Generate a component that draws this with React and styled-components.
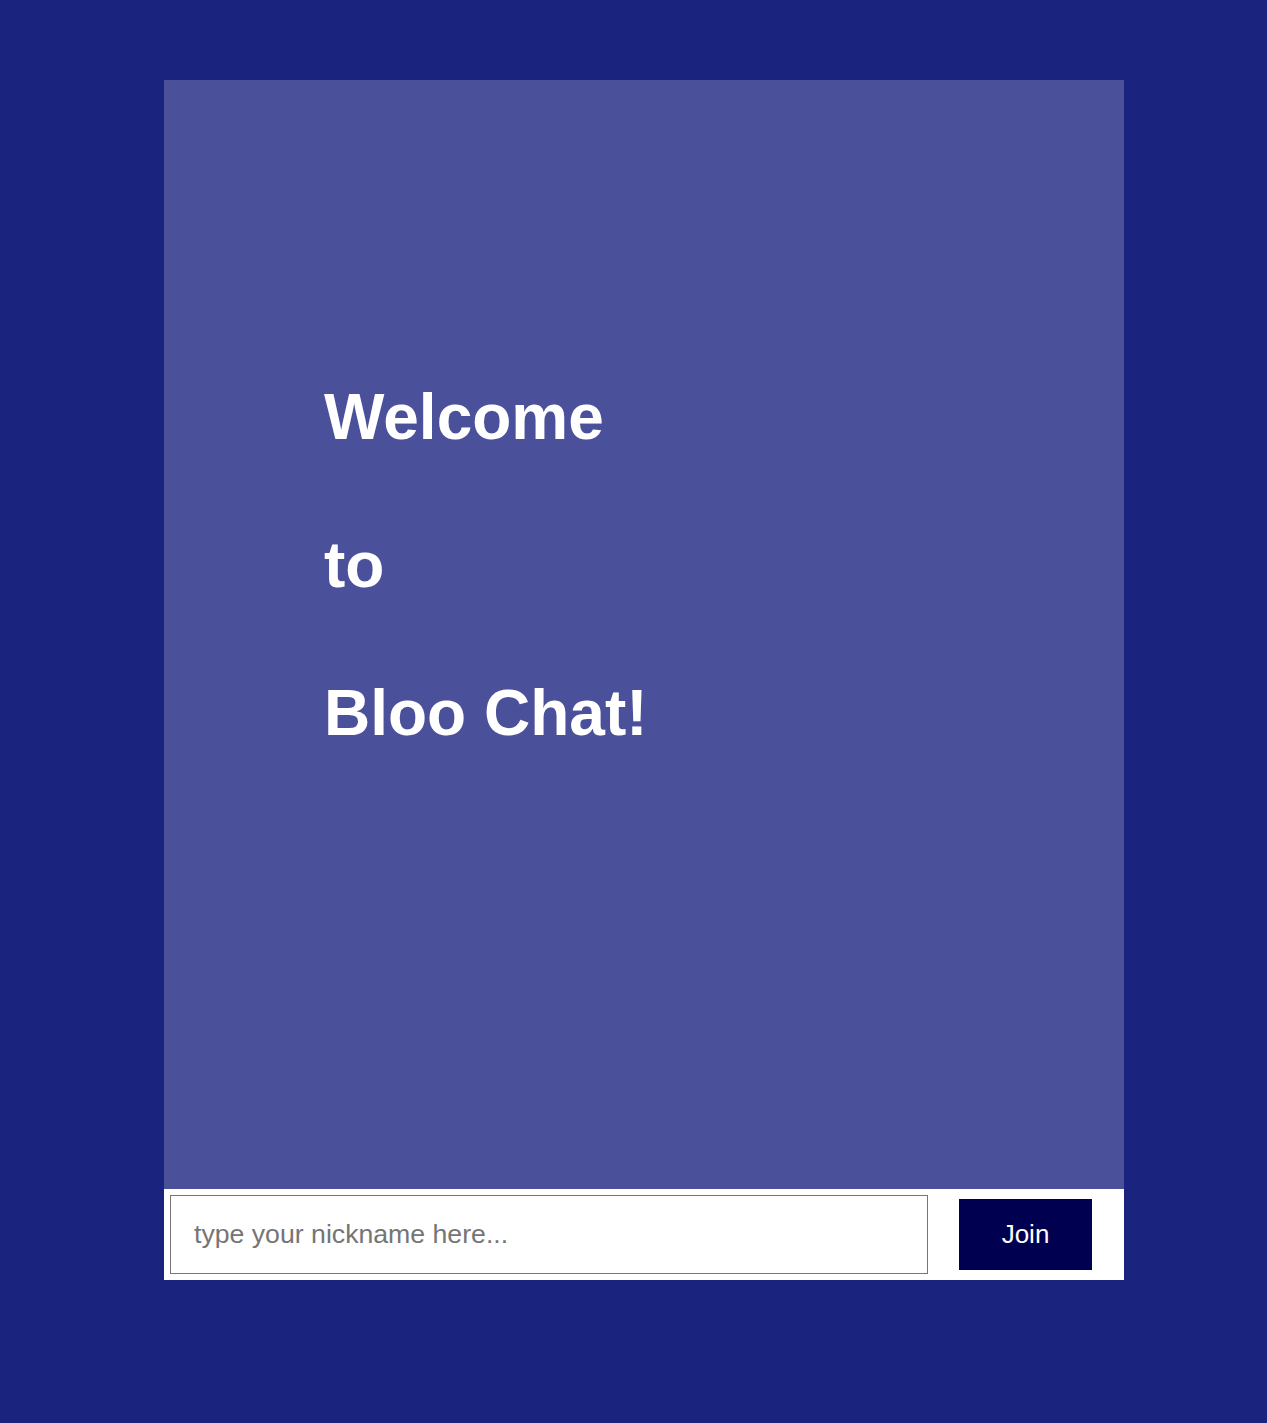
import styled, { createGlobalStyle } from "styled-components";

const GlobalStyle = createGlobalStyle`
  html, body {
    margin: 0;
    padding: 0;
    background-color: #1a237e;
    font-family: "Liberation Sans", Arial, sans-serif;
  }
`;

const Page = styled.div`
  min-height: 1423px;
  padding: 80px 0 0 164px;
  box-sizing: border-box;
`;

const ChatBox = styled.div`
  width: 960px;
  height: 1200px;
  display: flex;
  flex-direction: column;
  background-color: #4a5099;
`;

const Welcome = styled.div`
  flex: 1;
  padding: 300px 0 0 160px;
`;

const Title = styled.h1`
  margin: 0;
  color: #ffffff;
  font-size: 64px;
  line-height: 74px;
  font-weight: bold;
`;

const JoinBar = styled.form`
  height: 91px;
  box-sizing: border-box;
  background-color: #ffffff;
  display: flex;
  align-items: flex-start;
  padding: 6px 32px 0 6px;
  gap: 31px;
`;

const NicknameInput = styled.input`
  width: 758px;
  height: 79px;
  box-sizing: border-box;
  border: 1px solid #767676;
  padding: 0 23px;
  font-family: "Liberation Sans", Arial, sans-serif;
  font-size: 20pt;
  color: #333;
  &::placeholder {
    color: #757575;
  }
  &:focus {
    outline: none;
  }
`;

const JoinButton = styled.button`
  margin-top: 4px;
  width: 133px;
  height: 71px;
  border: none;
  background-color: #000050;
  color: #ffffff;
  font-family: "Liberation Sans", Arial, sans-serif;
  font-size: 19.5pt;
  cursor: pointer;
`;

export default function App() {
  return (
    <>
      <GlobalStyle />
      <Page>
        <ChatBox>
          <Welcome>
            <Title>
              Welcome
              <br />
              <br />
              to
              <br />
              <br />
              Bloo Chat!
            </Title>
          </Welcome>
          <JoinBar onSubmit={(e) => e.preventDefault()}>
            <NicknameInput type="text" placeholder="type your nickname here..." />
            <JoinButton type="submit">Join</JoinButton>
          </JoinBar>
        </ChatBox>
      </Page>
    </>
  );
}
